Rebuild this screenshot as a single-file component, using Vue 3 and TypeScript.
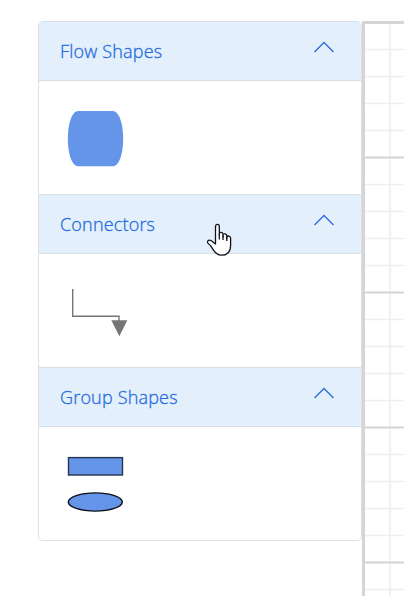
<script setup lang="ts">
import { ref } from 'vue'

type Kind = 'terminator' | 'connector' | 'group'
interface Palette { title: string; kind: Kind; expanded: boolean }

const palettes = ref<Palette[]>([
  { title: 'Flow Shapes', kind: 'terminator', expanded: true },
  { title: 'Connectors', kind: 'connector', expanded: true },
  { title: 'Group Shapes', kind: 'group', expanded: true },
])
</script>

<template>
  <main class="page">
    <aside class="palette">
      <section v-for="p in palettes" :key="p.title" class="section">
        <header class="header" @click="p.expanded = !p.expanded">
          <span class="title">{{ p.title }}</span>
          <svg class="chevron" width="22" height="12" viewBox="0 0 22 12">
            <path d="M1.5 11 L11 1.5 L20.5 11" fill="none" stroke="#2b6cdb" stroke-width="1.3" />
          </svg>
        </header>
        <div v-if="p.expanded" class="body">
          <svg v-if="p.kind === 'terminator'" width="57" height="58" viewBox="0 0 57 58">
            <path d="M11.5 2 H45.5 C59.7 2 59.7 57.3 45.5 57.3 H11.5 C-2.7 57.3 -2.7 2 11.5 2 Z" fill="#6495e8" />
          </svg>
          <svg v-else-if="p.kind === 'connector'" width="62" height="57" viewBox="0 0 62 57">
            <path d="M5.7 7 V34.2 H52 V39" fill="none" stroke="#757575" stroke-width="1.4" />
            <path d="M44.3 38.3 H60.3 L52.3 54.3 Z" fill="#757575" />
          </svg>
          <svg v-else width="57" height="57" viewBox="0 0 57 57">
            <rect x="1.5" y="2.6" width="54" height="17.4" fill="#6495e8" stroke="#26344f" stroke-width="1.4" />
            <ellipse cx="28.3" cy="47" rx="27" ry="9.1" fill="#6495e8" stroke="#0b0f18" stroke-width="1.4" />
          </svg>
        </div>
      </section>
    </aside>
    <div class="canvas">
      <svg width="42" height="575" viewBox="0 0 42 575">
        <path d="M28 3 V575" stroke="#ebebeb" stroke-width="1.4" />
        <template v-for="n in 21" :key="n">
          <path :d="`M3 ${n * 27 + 1.5} H42`" :stroke="n % 5 ? '#ededed' : '#d3d3d3'" :stroke-width="n % 5 ? 1.3 : 1.8" />
        </template>
      </svg>
    </div>
    <svg class="pointer" width="26" height="34" viewBox="0 0 26 34">
      <path d="M8.5 18.5 V3.5 C8.5 .7 12.3 .7 12.3 3.5 V12 V10.6 C12.3 8.8 16 9 16 11.2 V14 V12 C16 10.2 19.8 10.5 19.8 12.8 V15 V14 C20.5 12.3 23.6 12.8 23.6 15.2 V22.5 C23.6 29 19.8 32.2 14.5 32.2 C10.5 32.2 8.7 30.5 6.5 27.2 L3.5 22.6 L.9 20.1 C-.2 18.2 1.4 16.7 3.5 17.4 C5.5 18 6.4 19.8 8.5 21 Z" fill="#fff" stroke="#11131b" stroke-width="1.3" stroke-linejoin="round" />
      <path d="M12.3 11 V16.5 M16 12.5 V17 M19.8 13.5 V18" fill="none" stroke="#11131b" stroke-width="1.3" />
    </svg>
  </main>
</template>

<style>
body {
  background: #fff;
  overflow: hidden;
}
</style>

<style scoped>
.page {
  box-sizing: border-box;
  display: flex;
  width: 404px;
  height: 596px;
  padding: 21px 0 0 38px;
  font-family: "Open Sans", "Noto Sans", sans-serif;
  position: relative;
  overflow: hidden;
}
.palette {
  box-sizing: border-box;
  flex: none;
  align-self: flex-start;
  width: 324px;
  border: 1px solid #dbe1e6;
  border-top: 0;
  border-radius: 5px;
  overflow: hidden;
}
.section {
  border-top: 1px solid #d5dfe5;
}
.header {
  display: flex;
  align-items: center;
  justify-content: space-between;
  height: 58px;
  padding: 0 26px 0 21px;
  background: #e3effb;
  border-bottom: 1px solid #d5dfe5;
  cursor: pointer;
}
.title {
  font-size: 18px;
  font-weight: 300;
  line-height: 24px;
  letter-spacing: 0.18px;
  color: #1f6bde;
  -webkit-text-stroke: 0.3px #1f6bde;
  white-space: nowrap;
}
.chevron {
  flex: none;
  margin-bottom: 8px;
}
.body {
  box-sizing: border-box;
  height: 113px;
  padding: 28px;
}
.body svg {
  display: block;
}
.canvas {
  box-sizing: border-box;
  width: 42px;
  height: 575px;
  border-left: 3px solid #d5d5d5;
  border-top: 3px solid #d5d5d5;
  overflow: hidden;
}
.canvas svg {
  display: block;
  margin: -3px 0 0 -3px;
}
.pointer {
  position: absolute;
  left: 207px;
  top: 223px;
}
</style>
